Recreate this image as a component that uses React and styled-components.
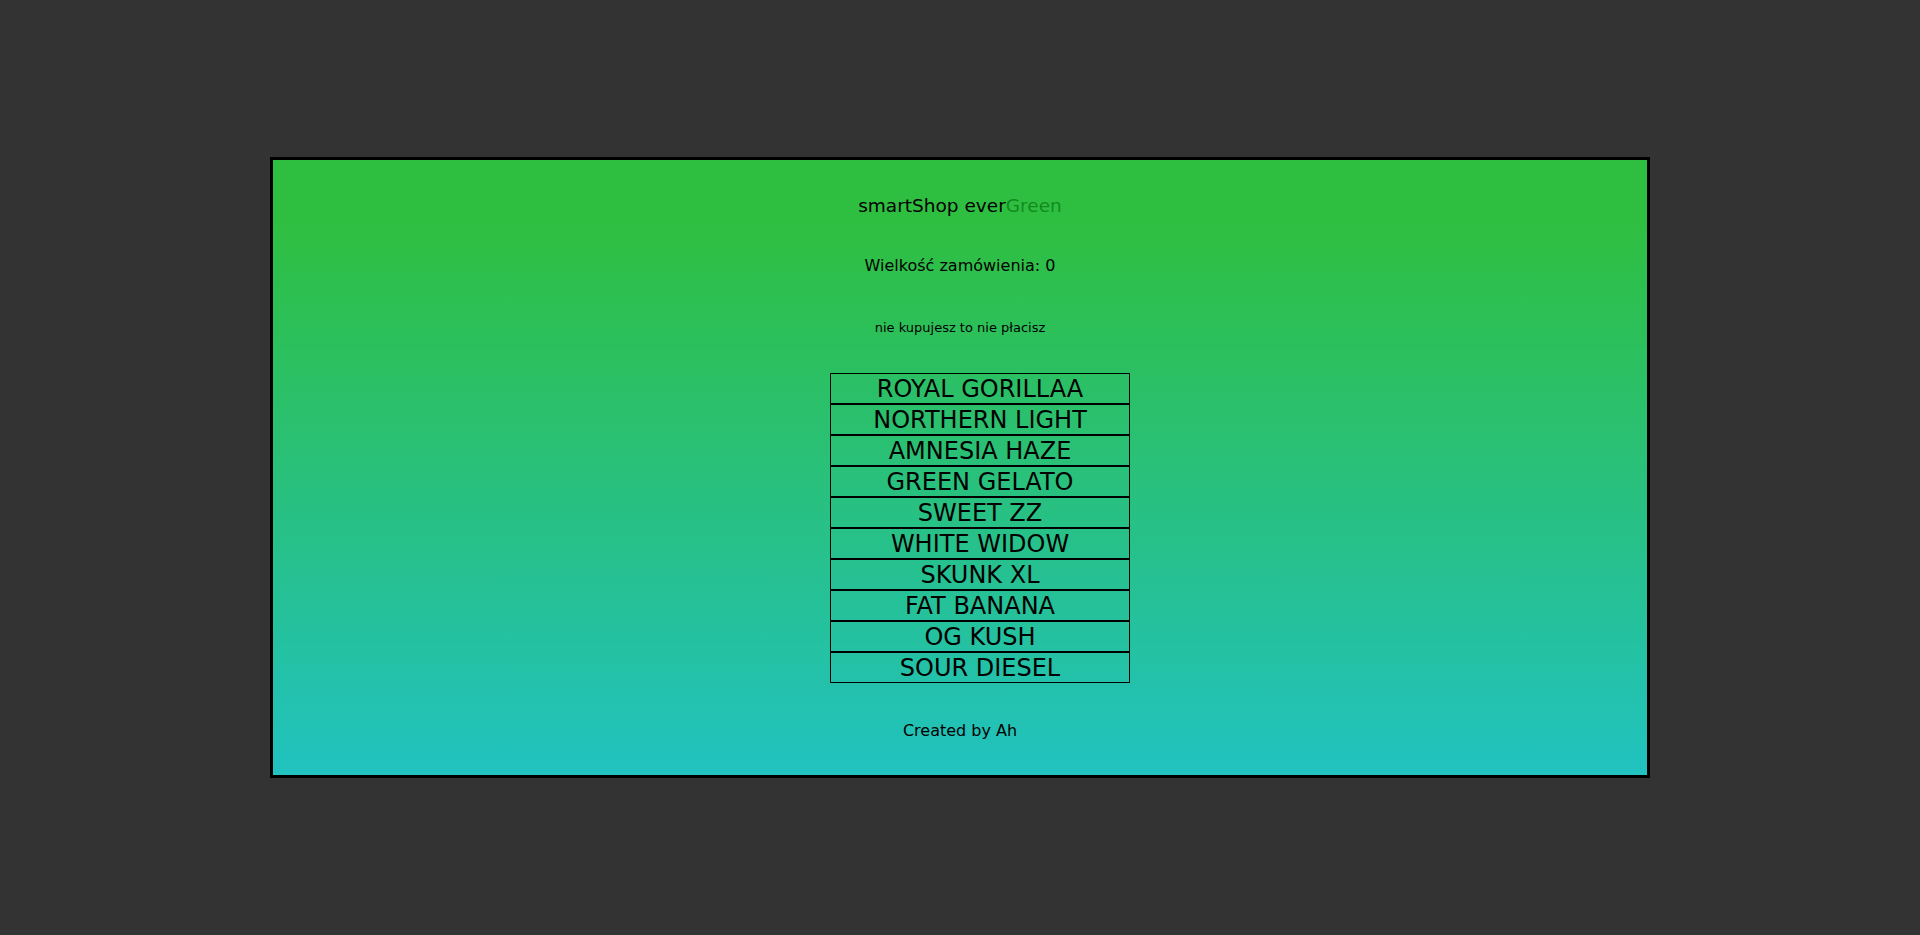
import React from 'react';
import styled, { createGlobalStyle } from 'styled-components';

const GlobalStyle = createGlobalStyle`
  html, body {
    margin: 0;
    padding: 0;
    height: 100%;
    background-color: #333333;
    font-family: "DejaVu Sans", "Noto Sans", sans-serif;
  }
  #root {
    height: 100%;
  }
`

const Page = styled.div`
  height: 100vh;
  display: flex;
  align-items: center;
  justify-content: center;
`

const Shop = styled.div`
  box-sizing: border-box;
  width: 1380px;
  height: 621px;
  border: 3px solid #000;
  background: linear-gradient(to bottom, #2fbf40 10%, #21c2c0 100%);
  display: flex;
  flex-direction: column;
  align-items: center;
  color: #000;
`

const Title = styled.h1`
  margin: 36px 0 0;
  font-size: 18.5px;
  font-weight: 400;
  line-height: 20px;
`

const Accent = styled.span`
  color: #128a20;
`

const OrderSize = styled.h2`
  margin: 40px 0 0;
  font-size: 16px;
  font-weight: 400;
  line-height: 20px;
`

const Motto = styled.p`
  margin: 44px 0 0;
  font-size: 13px;
  line-height: 16px;
`

const ProductList = styled.ul`
  list-style: none;
  margin: 37px 0 0;
  padding: 0 0 0 40px;
`

const Product = styled.li`
  box-sizing: border-box;
  width: 300px;
  height: 31px;
  padding-top: 2px;
  border: 1px solid #000;
  text-align: center;
  font-size: 24px;
  line-height: 27px;
  cursor: pointer;
`

const Footer = styled.footer`
  margin-top: 39px;
  font-size: 16px;
  line-height: 18px;
`

const products = [
  'ROYAL GORILLAA',
  'NORTHERN LIGHT',
  'AMNESIA HAZE',
  'GREEN GELATO',
  'SWEET ZZ',
  'WHITE WIDOW',
  'SKUNK XL',
  'FAT BANANA',
  'OG KUSH',
  'SOUR DIESEL',
];

const App = () => {
  return (
    <Page>
      <GlobalStyle />
      <Shop>
        <Title>smartShop ever<Accent>Green</Accent></Title>
        <OrderSize>Wielkość zamówienia: 0</OrderSize>
        <Motto>nie kupujesz to nie płacisz</Motto>
        <ProductList>
          {products.map((name) => (
            <Product key={name}>{name}</Product>
          ))}
        </ProductList>
        <Footer>Created by Ah</Footer>
      </Shop>
    </Page>
  );
}

export default App;
